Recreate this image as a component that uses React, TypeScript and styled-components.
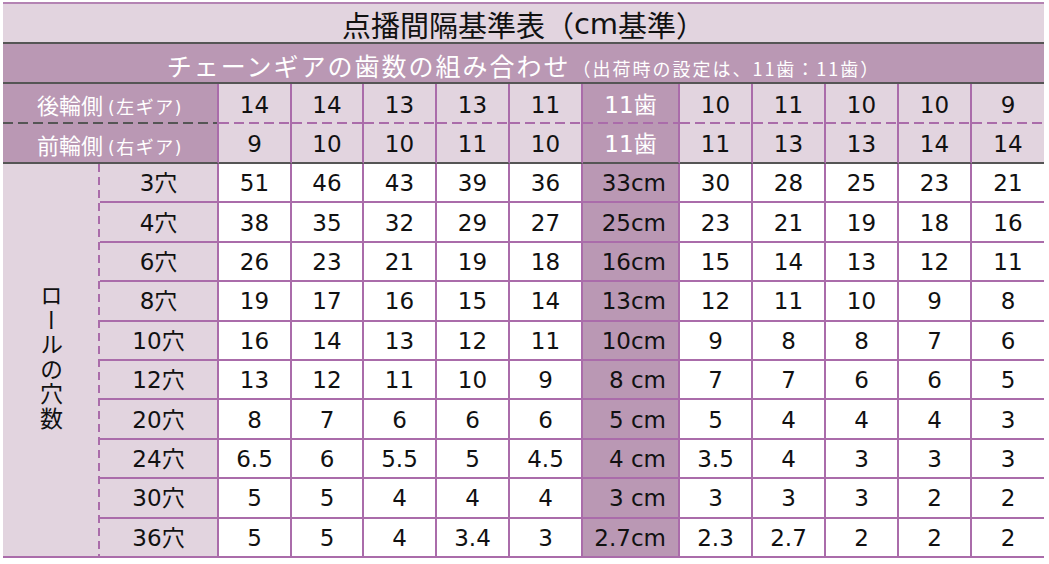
import React from "react";
import styled, { createGlobalStyle, css } from "styled-components";

const PURPLE = "#aa6caa";
const DARK = "#555555";
const LIGHT = "#e2d4df";
const MID = "#ba98b4";

const Global = createGlobalStyle`
  html, body { margin: 0; padding: 0; background: #ffffff; }
  body { font-family: "DejaVu Sans", "Noto Sans CJK JP", sans-serif; color: #111; }
`;

const Wrap = styled.div`
  padding: 2px 0 0 3px;
`;

const Grid = styled.div`
  display: grid;
  width: 1041px;
  grid-template-columns: 97px 119px 73px 72px 73px 73px 73px 97px 73px 73px 73px 73px 72px;
  grid-template-rows: 42px 40px 40px 40px repeat(10, 39.4px);
`;

const Cell = styled.div`
  box-sizing: border-box;
  display: flex;
  align-items: center;
  justify-content: center;
  white-space: nowrap;
`;

const Title = styled(Cell)`
  grid-column: 1 / -1;
  background: ${LIGHT};
  border-top: 2px solid #b483b3;
  border-bottom: 2px solid ${DARK};
  font-family: "Noto Sans CJK JP", sans-serif;
  font-size: 29px;
  padding-top: 2px;
`;

const CmLatin = styled.span`
  font-family: "DejaVu Sans", sans-serif;
`;

const Subtitle = styled(Cell)`
  grid-column: 1 / -1;
  background: ${MID};
  border-bottom: 2px solid ${DARK};
  color: #fff;
  font-family: "Noto Sans CJK JP", sans-serif;
  align-items: baseline;
  padding-top: 3px;
`;

const SubMain = styled.span`
  font-size: 25px;
  letter-spacing: 2px;
`;

const SubNote = styled.span`
  font-size: 18px;
  letter-spacing: 2px;
  margin-left: 2px;
`;

const dashH = (color: string, w: number) => css`
  background-image: repeating-linear-gradient(to right, ${color} 0 10px, transparent 10px 15px);
  background-size: 100% ${w}px;
  background-position: left bottom;
  background-repeat: no-repeat;
`;

const HeadLabel = styled(Cell)<{ $first?: boolean }>`
  grid-column: 1 / 3;
  background-color: ${MID};
  color: #fff;
  border-right: 2px solid ${PURPLE};
  ${(p) => (p.$first ? dashH(DARK, 2) : css`border-bottom: 2px solid ${DARK};`)}
  font-family: "Noto Sans CJK JP", sans-serif;
  align-items: baseline;
  padding-top: 4px;
`;

const HeadMain = styled.span`
  font-size: 22px;
`;

const HeadNote = styled.span`
  font-size: 18px;
  letter-spacing: 1.5px;
  margin-left: 5px;
  & > b {
    font-weight: normal;
    font-family: "DejaVu Sans", sans-serif;
    font-size: 17px;
  }
`;

const HeadVal = styled(Cell)<{ $first?: boolean; $hi?: boolean; $last?: boolean }>`
  background-color: ${(p) => (p.$hi ? MID : LIGHT)};
  color: ${(p) => (p.$hi ? "#fff" : "#111")};
  border-right: ${(p) => (p.$last ? "none" : `2px solid ${PURPLE}`)};
  ${(p) => (p.$first ? dashH(PURPLE, 2) : css`border-bottom: 2px solid ${DARK};`)}
  font-size: 23px;
  padding-top: 2px;
`;

const Kanji = styled.span`
  font-family: "Noto Sans CJK JP", sans-serif;
  position: relative;
  top: -2px;
`;

const SideLabel = styled(Cell)`
  grid-column: 1;
  grid-row: 5 / span 10;
  background-color: ${LIGHT};
  border-bottom: 2px solid ${PURPLE};
  background-image: repeating-linear-gradient(to bottom, ${PURPLE} 0 8px, transparent 8px 13px);
  background-size: 2px 100%;
  background-position: right top;
  background-repeat: no-repeat;
`;

const Vertical = styled.span`
  writing-mode: vertical-rl;
  text-orientation: upright;
  font-family: "Noto Sans CJK JP", sans-serif;
  font-size: 23px;
  letter-spacing: 1.5px;
  margin-top: -4px;
`;

const HoleLabel = styled(Cell)`
  background: ${LIGHT};
  border-right: 2px solid ${PURPLE};
  border-bottom: 2px solid ${PURPLE};
  font-size: 23px;
  padding-top: 1px;
`;

const Val = styled(Cell)<{ $hi?: boolean; $last?: boolean }>`
  background: ${(p) => (p.$hi ? MID : "#fff")};
  border-right: ${(p) => (p.$last ? "none" : `2px solid ${PURPLE}`)};
  border-bottom: 2px solid ${PURPLE};
  font-size: 23px;
  padding-top: 1px;
  ${(p) =>
    p.$hi &&
    css`
      justify-content: flex-end;
      padding-right: 12px;
    `}
`;

const rear = ["14", "14", "13", "13", "11", "11", "10", "11", "10", "10", "9"];
const front = ["9", "10", "10", "11", "10", "11", "11", "13", "13", "14", "14"];

const rows: [string, string[]][] = [
  ["3", ["51", "46", "43", "39", "36", "33cm", "30", "28", "25", "23", "21"]],
  ["4", ["38", "35", "32", "29", "27", "25cm", "23", "21", "19", "18", "16"]],
  ["6", ["26", "23", "21", "19", "18", "16cm", "15", "14", "13", "12", "11"]],
  ["8", ["19", "17", "16", "15", "14", "13cm", "12", "11", "10", "9", "8"]],
  ["10", ["16", "14", "13", "12", "11", "10cm", "9", "8", "8", "7", "6"]],
  ["12", ["13", "12", "11", "10", "9", "8 cm", "7", "7", "6", "6", "5"]],
  ["20", ["8", "7", "6", "6", "6", "5 cm", "5", "4", "4", "4", "3"]],
  ["24", ["6.5", "6", "5.5", "5", "4.5", "4 cm", "3.5", "4", "3", "3", "3"]],
  ["30", ["5", "5", "4", "4", "4", "3 cm", "3", "3", "3", "2", "2"]],
  ["36", ["5", "5", "4", "3.4", "3", "2.7cm", "2.3", "2.7", "2", "2", "2"]],
];

const HI = 5;

function GearRow({ label, note, values, first }: { label: string; note: string; values: string[]; first?: boolean }) {
  return (
    <>
      <HeadLabel $first={first}>
        <HeadMain>{label}</HeadMain>
        <HeadNote>
          <b>(</b>
          {note}
          <b>)</b>
        </HeadNote>
      </HeadLabel>
      {values.map((v, i) => (
        <HeadVal key={i} $first={first} $hi={i === HI} $last={i === values.length - 1}>
          {v}
          {i === HI && <Kanji>歯</Kanji>}
        </HeadVal>
      ))}
    </>
  );
}

export default function App() {
  return (
    <>
      <Global />
      <Wrap>
        <Grid>
          <Title>
            点播間隔基準表（<CmLatin>cm</CmLatin>基準）
          </Title>
          <Subtitle>
            <SubMain>チェーンギアの歯数の組み合わせ</SubMain>
            <SubNote>（出荷時の設定は、11歯：11歯）</SubNote>
          </Subtitle>
          <GearRow label="後輪側" note="左ギア" values={rear} first />
          <GearRow label="前輪側" note="右ギア" values={front} />
          <SideLabel>
            <Vertical>ロールの穴数</Vertical>
          </SideLabel>
          {rows.map(([holes, vals]) => (
            <React.Fragment key={holes}>
              <HoleLabel>
                {holes}
                <Kanji>穴</Kanji>
              </HoleLabel>
              {vals.map((v, i) => (
                <Val key={i} $hi={i === HI} $last={i === vals.length - 1}>
                  {v}
                </Val>
              ))}
            </React.Fragment>
          ))}
        </Grid>
      </Wrap>
    </>
  );
}
